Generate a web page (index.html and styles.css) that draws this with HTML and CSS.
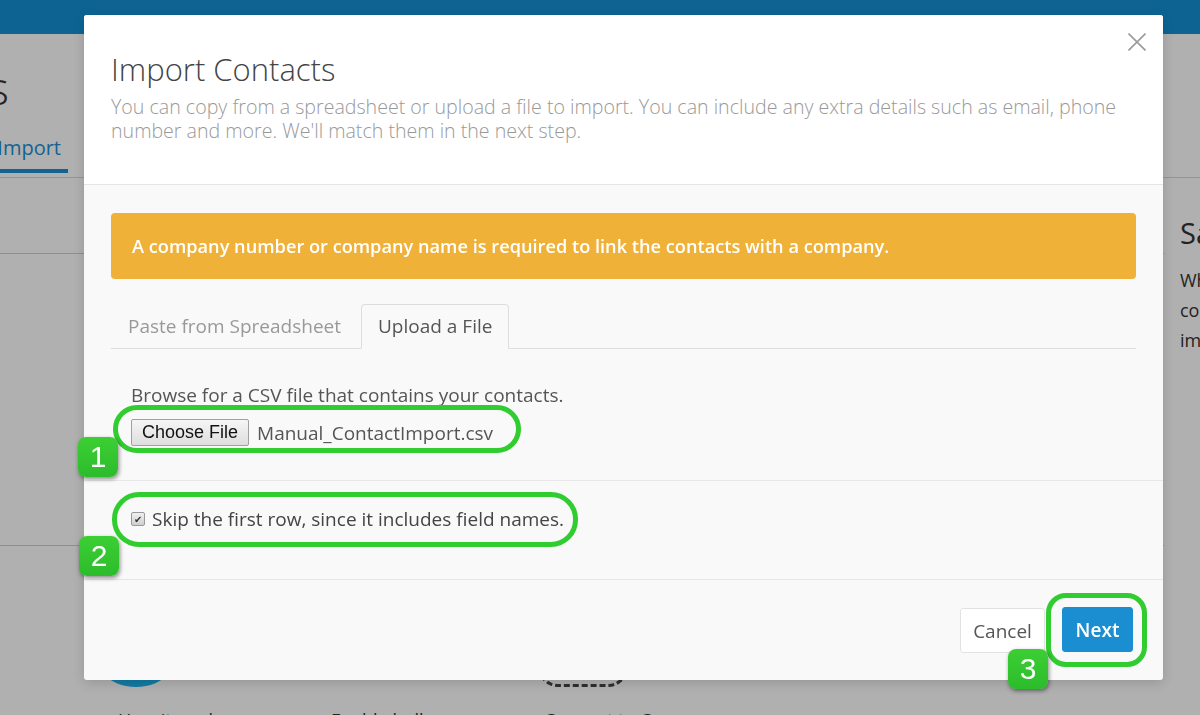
FILE: index.html
```html
<!DOCTYPE html>
<html lang="en">
<head>
    <meta charset="UTF-8">
    <meta name="viewport" content="width=device-width, initial-scale=1.0">
    <title>Contacts - Import</title>
    <link rel="stylesheet" href="styles.css">
</head>
<body>
    <!-- page behind the dialog -->
    <div class="page">
        <div class="topbar"></div>
        <div class="page-head">
            <div class="page-title"><span>Contacts</span></div>
            <div class="page-tabs"><span class="page-tab active">Import</span></div>
        </div>
        <div class="page-content">
            <div class="page-main">
                <div class="main-row row-a"></div>
                <div class="main-row row-b"></div>
                <div class="steps">
                    <div class="step">
                        <div class="step-icon circle"></div>
                        <div class="step-label">How it works</div>
                    </div>
                    <div class="step">
                        <div class="step-icon"></div>
                        <div class="step-label">Enable bulk</div>
                    </div>
                    <div class="step">
                        <div class="step-icon dashed"></div>
                        <div class="step-label">Connect to C</div>
                    </div>
                </div>
            </div>
            <div class="page-side">
                <h3>Sample</h3>
                <p>When</p>
                <p>contacts</p>
                <p>import</p>
            </div>
        </div>
    </div>

    <div class="backdrop"></div>

    <div class="modal">
        <div class="modal-header">
            <div class="header-text">
                <h1>Import Contacts</h1>
                <p>You can copy from a spreadsheet or upload a file to import. You can include any extra details such as email, phone number and more. We'll match them in the next step.</p>
            </div>
            <button class="close" type="button" aria-label="Close">
                <svg width="18" height="18" viewBox="0 0 18 18"><path d="M0.5 0.5L17.5 17.5M17.5 0.5L0.5 17.5" stroke="#9a9a9a" stroke-width="1.6" fill="none"/></svg>
            </button>
        </div>

        <div class="modal-body">
            <div class="upload-section">
                <div class="alert">A company number or company name is required to link the contacts with a company.</div>

                <div class="tabs">
                    <span class="tab">Paste from Spreadsheet</span>
                    <span class="tab active">Upload a File</span>
                </div>

                <div class="tab-pane">
                    <p class="hint">Browse for a CSV file that contains your contacts.</p>
                    <div class="file-row">
                        <span class="file-btn">Choose File</span>
                        <span class="file-name">Manual_ContactImport.csv</span>
                    </div>
                </div>
            </div>

            <div class="skip-section">
                <label class="skip">
                    <span class="check">&#10004;</span>
                    Skip the first row, since it includes field names.
                </label>
            </div>
        </div>

        <div class="modal-footer">
            <button class="btn btn-cancel" type="button">Cancel</button>
            <button class="btn btn-next" type="button">Next</button>
        </div>

        <!-- tutorial callouts drawn over the dialog -->
        <div class="ring ring-1"></div>
        <div class="ring ring-2"></div>
        <div class="ring ring-3"></div>
        <div class="badge badge-1">1</div>
        <div class="badge badge-2">2</div>
        <div class="badge badge-3">3</div>
    </div>
</body>
</html>
```

FILE: styles.css
```css
body {
    margin: 0;
    width: 1200px;
    height: 715px;
    overflow: hidden;
    font-family: 'Open Sans', sans-serif;
    background: #ffffff;
    color: #333;
}

/* ---------- page behind ---------- */
.page {
    width: 1200px;
    height: 715px;
    overflow: hidden;
}
.topbar {
    height: 34px;
    background: #1391d6;
}
.page-head {
    border-bottom: 1px solid #d8d8d8;
    height: 144px;
    box-sizing: border-box;
}
.page-title {
    display: flex;
    justify-content: flex-end;
    width: 9px;
    white-space: nowrap;
    font-size: 46px;
    font-weight: 300;
    line-height: 50px;
    padding-top: 28px;
    color: #333;
}
.page-tabs {
    display: flex;
    justify-content: flex-end;
    width: 68px;
    white-space: nowrap;
    margin-top: 22px;
}
.page-tab {
    font-size: 20px;
    color: #1e8fd2;
    padding: 0 7px 8px 0;
    border-bottom: 4px solid #1e8fd2;
}
.page-content {
    display: flex;
}
.page-main {
    flex: 1;
}
.main-row {
    border-bottom: 1px solid #d0d0d0;
}
.row-a {
    height: 75px;
}
.row-b {
    height: 291px;
}
.steps {
    display: flex;
    padding-left: 86px;
    padding-top: 41px;
}
.step {
    width: 213px;
}
.step-icon {
    width: 100px;
    height: 100px;
}
.step-icon.circle {
    border-radius: 50%;
    background: #1ab2ea;
}
.step-icon.dashed {
    width: 84px;
    height: 92px;
    margin-left: 26px;
    margin-top: 2px;
    margin-bottom: 6px;
    border: 3px dashed #444;
    border-radius: 14px 14px 20px 20px;
}
.step-label {
    font-size: 18px;
    margin-top: 21px;
    padding-left: 32px;
}
.page-side {
    width: 20px;
    padding-left: 16px;
    padding-top: 35px;
    white-space: nowrap;
    overflow: hidden;
}
.page-side h3 {
    margin: 0 0 12px;
    font-size: 29px;
    font-weight: 400;
    line-height: 40px;
}
.page-side p {
    margin: 0;
    font-size: 18px;
    line-height: 30px;
}

.backdrop {
    position: fixed;
    top: 0;
    left: 0;
    right: 0;
    bottom: 0;
    background: rgba(0, 0, 0, 0.31);
}

/* ---------- dialog ---------- */
.modal {
    position: absolute;
    left: 84px;
    top: 15px;
    width: 1079px;
    height: 665px;
    display: flex;
    flex-direction: column;
    background: #f9f9f9;
    border-radius: 3px;
    box-shadow: 0 3px 12px rgba(0, 0, 0, 0.15);
}
.modal-header {
    display: flex;
    background: #ffffff;
    padding: 37px 17px 0 27px;
    height: 170px;
    box-sizing: border-box;
    border-bottom: 1px solid #e5e5e5;
    border-radius: 3px 3px 0 0;
}
.header-text {
    flex: 1;
}
.modal-header h1 {
    margin: 0;
    font-size: 31px;
    font-weight: 300;
    line-height: 35px;
    color: #444;
}
.modal-header p {
    margin: 8px 0 0;
    font-size: 19.6px;
    font-weight: 300;
    line-height: 24px;
    color: #999;
}
.close {
    background: none;
    border: none;
    padding: 0;
    margin-top: -19px;
    width: 18px;
    height: 18px;
}

.modal-body {
    flex: 1;
}
.upload-section {
    padding: 28px 27px 34px;
}
.alert {
    height: 66px;
    display: flex;
    align-items: center;
    padding: 0 21px;
    background: #efb137;
    border-radius: 4px;
    color: #ffffff;
    font-size: 18.2px;
    font-weight: 600;
}
.tabs {
    display: flex;
    margin-top: 25px;
    height: 44px;
    border-bottom: 1px solid #dddddd;
}
.tab {
    padding: 0 17px;
    margin-right: 3px;
    font-size: 19px;
    line-height: 44px;
    color: #999;
}
.tab.active {
    color: #555;
    background: #f9f9f9;
    border: 1px solid #dddddd;
    border-bottom-color: transparent;
    border-radius: 4px 4px 0 0;
    margin-bottom: -1px;
    line-height: 43px;
    padding: 0 16px;
}
.tab-pane {
    padding: 0 20px;
}
.hint {
    margin: 34px 0 0;
    font-size: 19px;
    line-height: 24px;
    color: #555;
}
.file-row {
    display: flex;
    align-items: center;
    margin-top: 12px;
    height: 27px;
}
.file-btn {
    height: 27px;
    box-sizing: border-box;
    padding: 0 10px;
    border: 1px solid #a0a0a0;
    border-radius: 2px;
    background: linear-gradient(#f6f6f6, #dedede);
    font-family: 'Liberation Sans', Arial, sans-serif;
    font-size: 18px;
    line-height: 25px;
    color: #111;
}
.file-name {
    margin-left: 8px;
    font-size: 19px;
    color: #555;
}

.skip-section {
    border-top: 1px solid #e8e8e8;
    padding: 26px 20px 0 47px;
}
.skip {
    display: flex;
    align-items: center;
    font-size: 19px;
    line-height: 24px;
    color: #444;
}
.check {
    width: 14px;
    height: 14px;
    box-sizing: border-box;
    margin-right: 7px;
    border: 1px solid #999;
    border-radius: 2px;
    background: linear-gradient(#f0f0f0, #cfcfcf);
    font-size: 10px;
    line-height: 12px;
    text-align: center;
    color: #333;
}

.modal-footer {
    height: 101px;
    box-sizing: border-box;
    border-top: 1px solid #e5e5e5;
    display: flex;
    justify-content: flex-end;
    align-items: flex-start;
    gap: 17px;
    padding: 28px 30px 0;
}
.btn {
    height: 45px;
    border-radius: 3px;
    font-family: 'Open Sans', sans-serif;
    font-size: 19px;
    padding: 0;
}
.btn-cancel {
    width: 85px;
    background: #ffffff;
    border: 1px solid #e2e2e2;
    color: #555;
}
.btn-next {
    width: 71px;
    background: #1a8ed0;
    border: 1px solid #1a8ed0;
    color: #ffffff;
    font-weight: 600;
    margin-top: -1px;
}

/* ---------- callouts ---------- */
.ring {
    position: absolute;
    border: 5px solid #30cc30;
    box-sizing: border-box;
}
.ring-1 {
    left: 29px;
    top: 390px;
    width: 408px;
    height: 48px;
    border-radius: 24px;
}
.ring-2 {
    left: 28px;
    top: 477px;
    width: 466px;
    height: 55px;
    border-radius: 27px;
}
.ring-3 {
    left: 962px;
    top: 578px;
    width: 101px;
    height: 74px;
    border-radius: 20px;
}
.badge {
    position: absolute;
    width: 40px;
    height: 40px;
    border-radius: 8px;
    background: linear-gradient(#3ccf33, #2cbc2c);
    box-shadow: 1px 2px 4px rgba(0, 0, 0, 0.45);
    color: #ffffff;
    font-family: 'Liberation Sans', Arial, sans-serif;
    font-size: 30px;
    line-height: 40px;
    text-align: center;
}
.badge-1 {
    left: -6px;
    top: 422px;
}
.badge-2 {
    left: -5px;
    top: 521px;
}
.badge-3 {
    left: 924px;
    top: 634px;
}
```
